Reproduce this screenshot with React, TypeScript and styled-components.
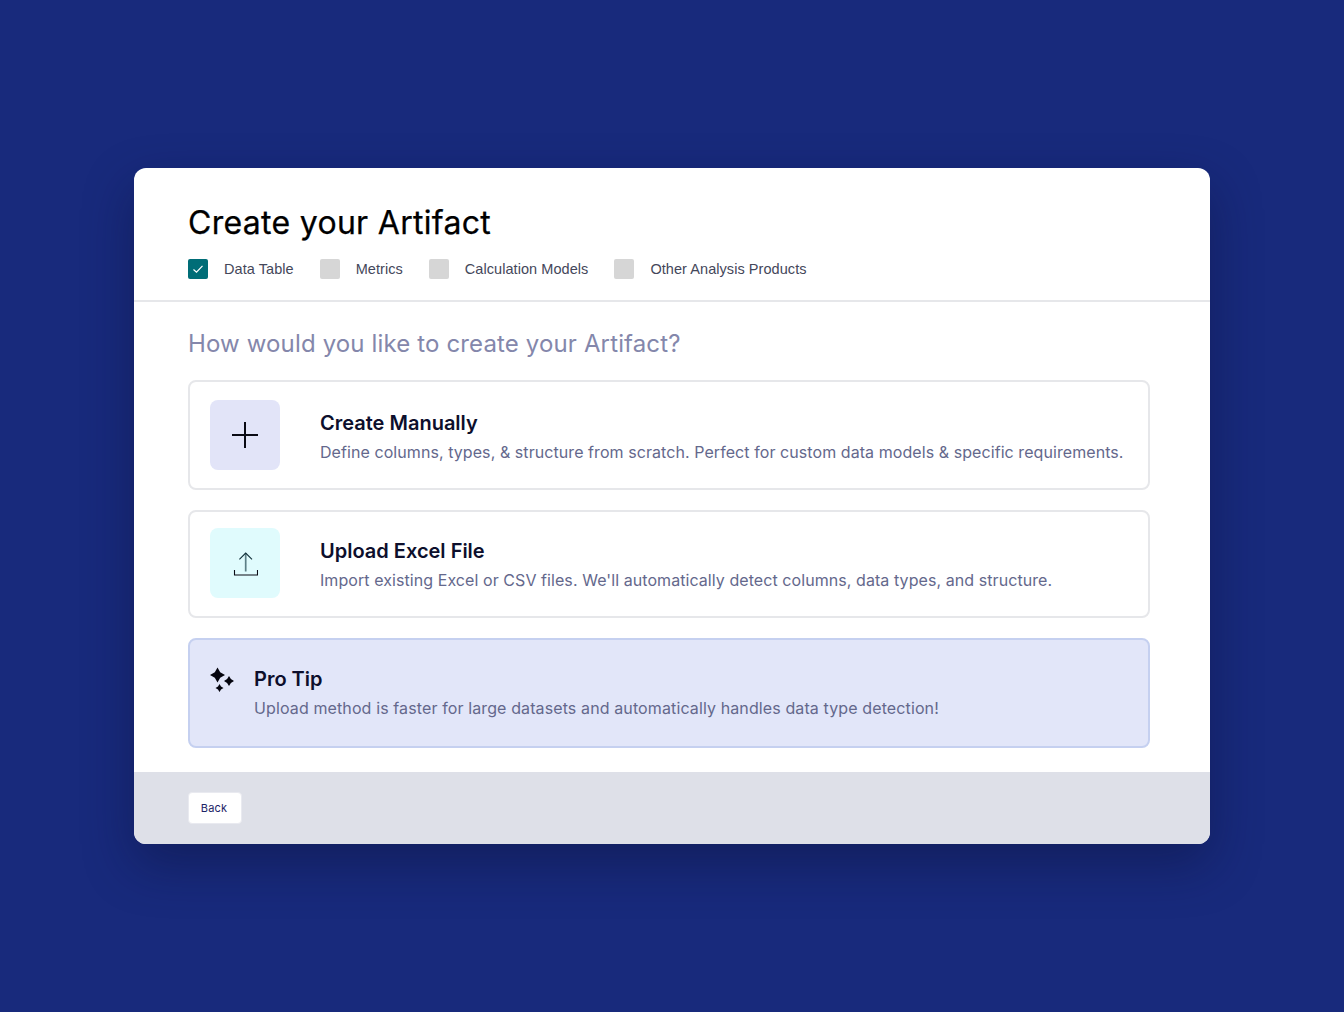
import { ReactElement } from "react";
import styled, { createGlobalStyle } from "styled-components";

const steps = [
  { label: "Data Table", done: true },
  { label: "Metrics", done: false },
  { label: "Calculation Models", done: false },
  { label: "Other Analysis Products", done: false },
];

function PlusIcon(): ReactElement {
  return (
    <svg width="28" height="28" viewBox="0 0 28 28" fill="none">
      <path d="M14 1v26M1 14h26" stroke="#0a0a14" strokeWidth="2" />
    </svg>
  );
}

function UploadIcon(): ReactElement {
  return (
    <svg width="26" height="26" viewBox="0 0 26 26" fill="none">
      <path d="M13.7 3v18.5" stroke="#5c7f86" strokeWidth="1.7" />
      <path d="M7.4 9.4 13.7 3 20 9.4" stroke="#12303a" strokeWidth="1.1" />
      <path d="M2.5 20v5h23v-5" stroke="#0a0a14" strokeWidth="1.1" />
    </svg>
  );
}

function SparkleIcon(): ReactElement {
  return (
    <svg width="26" height="26" viewBox="0 0 26 26" fill="#05050f">
      <path d="M7.5 .5 10.2 5.3 15 8 10.2 10.7 7.5 15.5 4.8 10.7 0 8 4.8 5.3Z" />
      <path d="M19 9 20.9 12.1 24 14 20.9 15.9 19 19 17.1 15.9 14 14 17.1 12.1Z" />
      <path d="M9.5 17 11 19.5 13.5 21 11 22.5 9.5 25 8 22.5 5.5 21 8 19.5Z" />
    </svg>
  );
}

export default function App(): ReactElement {
  return (
    <>
      <GlobalStyle />
      <Page>
        <Dialog>
          <Header>
            <Title>Create your Artifact</Title>
            <Steps>
              {steps.map((step) => (
                <Step key={step.label}>
                  <Box $done={step.done}>
                    {step.done && (
                      <svg width="12" height="12" viewBox="0 0 12 12" fill="none">
                        <path d="M1.5 6.5 4.5 9.2 10.5 2.8" stroke="#fff" strokeWidth="1.2" />
                      </svg>
                    )}
                  </Box>
                  <StepLabel>{step.label}</StepLabel>
                </Step>
              ))}
            </Steps>
          </Header>
          <Body>
            <Question>How would you like to create your Artifact?</Question>
            <Option>
              <IconTile $bg="#e2e4f8">
                <PlusIcon />
              </IconTile>
              <OptionText>
                <OptionTitle>Create Manually</OptionTitle>
                <OptionDesc>
                  Define columns, types, &amp; structure from scratch. Perfect for custom data models &amp; specific requirements.
                </OptionDesc>
              </OptionText>
            </Option>
            <Option $short>
              <IconTile $bg="#e0fbfd">
                <UploadIcon />
              </IconTile>
              <OptionText>
                <OptionTitle>Upload Excel File</OptionTitle>
                <OptionDesc>
                  Import existing Excel or CSV files. We'll automatically detect columns, data types, and structure.
                </OptionDesc>
              </OptionText>
            </Option>
            <Tip>
              <TipIcon>
                <SparkleIcon />
              </TipIcon>
              <TipText>
                <OptionTitle>Pro Tip</OptionTitle>
                <TipDesc>
                  Upload method is faster for large datasets and automatically handles data type detection!
                </TipDesc>
              </TipText>
            </Tip>
          </Body>
          <Footer>
            <BackButton>Back</BackButton>
          </Footer>
        </Dialog>
      </Page>
    </>
  );
}

const GlobalStyle = createGlobalStyle`
  html, body {
    margin: 0;
    padding: 0;
    background: #182a7c;
  }
`;

const Page = styled.div`
  width: 1344px;
  height: 1012px;
  display: flex;
  align-items: center;
  justify-content: center;
  background: #182a7c;
  font-family: "Inter", sans-serif;
`;

const Dialog = styled.div`
  width: 1076px;
  height: 676px;
  display: flex;
  flex-direction: column;
  background: #fff;
  border-radius: 12px;
  overflow: hidden;
  box-shadow: 0 20px 50px rgba(12, 18, 60, 0.45);
`;

const Header = styled.div`
  height: 134px;
  box-sizing: border-box;
  padding: 35px 54px 0;
  border-bottom: 2px solid #e6e7ea;
`;

const Title = styled.h1`
  margin: 0;
  font-size: 32px;
  line-height: 40px;
  font-weight: 400;
  letter-spacing: 0.3px;
  -webkit-text-stroke: 0.25px #000;
  color: #000;
`;

const Steps = styled.div`
  display: flex;
  gap: 26px;
  margin-top: 16px;
`;

const Step = styled.div`
  display: flex;
  align-items: center;
  gap: 16px;
`;

const Box = styled.div<{ $done: boolean }>`
  width: 20px;
  height: 20px;
  border-radius: 2px;
  display: flex;
  align-items: center;
  justify-content: center;
  background: ${(p) => (p.$done ? "#006d77" : "#d6d6d6")};
`;

const StepLabel = styled.span`
  font-family: "Liberation Sans", Arial, sans-serif;
  font-size: 14.5px;
  line-height: 20px;
  letter-spacing: 0.06px;
  color: #44475a;
`;

const Body = styled.div`
  flex: 1;
  display: flex;
  flex-direction: column;
  padding: 26px 60px 0 54px;
`;

const Question = styled.h2`
  margin: 0 0 20px;
  font-size: 24px;
  line-height: 32px;
  font-weight: 400;
  letter-spacing: 0.14px;
  color: #8487ab;
`;

const Option = styled.div<{ $short?: boolean }>`
  height: ${(p) => (p.$short ? "108px" : "110px")};
  box-sizing: border-box;
  margin-bottom: 20px;
  padding: ${(p) => (p.$short ? "16px" : "18px")} 20px 0;
  display: flex;
  align-items: flex-start;
  gap: 40px;
  background: #fff;
  border: 2px solid #e6e7ea;
  border-radius: 8px;
`;

const IconTile = styled.div<{ $bg: string }>`
  width: 70px;
  height: 70px;
  flex: none;
  border-radius: 8px;
  display: flex;
  align-items: center;
  justify-content: center;
  background: ${(p) => p.$bg};
`;

const OptionText = styled.div`
  display: flex;
  flex-direction: column;
  gap: 6px;
  padding-top: 11px;
`;

const TipText = styled(OptionText)`
  padding-top: 0;
`;

const OptionTitle = styled.div`
  font-size: 20px;
  line-height: 24px;
  font-weight: 600;
  color: #0d0f2c;
`;

const OptionDesc = styled.div`
  font-size: 16px;
  line-height: 22px;
  letter-spacing: 0.07px;
  color: #64688c;
`;

const TipDesc = styled(OptionDesc)`
  letter-spacing: 0.115px;
`;

const Tip = styled.div`
  height: 110px;
  box-sizing: border-box;
  padding: 27px 20px 0;
  display: flex;
  gap: 18px;
  background: #e2e6f9;
  border: 2px solid #c5d0f0;
  border-radius: 8px;
`;

const TipIcon = styled.div`
  width: 26px;
  height: 26px;
  flex: none;
`;

const Footer = styled.div`
  height: 72px;
  box-sizing: border-box;
  padding: 20px 54px;
  background: #dee0e8;
`;

const BackButton = styled.button`
  width: 54px;
  height: 32px;
  padding: 0 2px 0 0;
  border: 1px solid #e9eaf0;
  border-radius: 4px;
  background: #fff;
  font-family: "Inter", sans-serif;
  font-size: 11px;
  font-weight: 400;
  letter-spacing: 0.2px;
  color: #1c2466;
`;
